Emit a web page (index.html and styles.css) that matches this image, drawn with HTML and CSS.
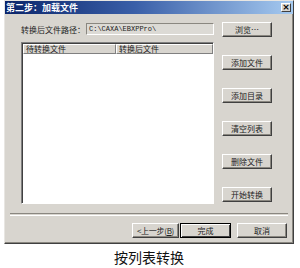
FILE: index.html
```html
<!DOCTYPE html>
<html lang="zh-CN">
<head>
<meta charset="UTF-8">
<title>按列表转换</title>
<link rel="stylesheet" href="styles.css">
</head>
<body>

<div class="page">
  <div class="dialog">
    <div class="titlebar">
      <span class="title">第二步：加载文件</span>
      <span class="close">×</span>
    </div>
    <div class="body">
      <div class="main">
        <div class="left">
          <div class="path-row">
            <span class="label">转换后文件路径：</span>
            <div class="field">C:\CAXA\EBXPPro\</div>
          </div>
          <div class="list">
            <div class="list-head">
              <div class="col col1">待转换文件</div>
              <div class="col col2">转换后文件</div>
            </div>
          </div>
        </div>
        <div class="right">
          <button class="btn">浏览…</button>
          <button class="btn">添加文件</button>
          <button class="btn">添加目录</button>
          <button class="btn">清空列表</button>
          <button class="btn">删除文件</button>
          <button class="btn">开始转换</button>
        </div>
      </div>
      <div class="sep"></div>
      <div class="footer">
        <button class="btn prev">&lt;上一步(<u>B</u>)</button>
        <button class="btn default">完成</button>
        <button class="btn cancel">取消</button>
      </div>
    </div>
  </div>
  <p class="caption">按列表转换</p>
</div>

</body>
</html>
```

FILE: styles.css
```css
body {
  margin: 0;
  padding: 0;
  background-color: #fff;
  font-family: "Noto Sans CJK SC", "Liberation Sans", sans-serif;
}
.page {
  width: 300px;
  padding-left: 4px;
  box-sizing: border-box;
}
.dialog {
  width: 290px;
  height: 244px;
  box-sizing: border-box;
  background-color: #d8d5cf;
  border: 1px solid;
  border-color: #e8e6e2 #404040 #404040 #e8e6e2;
  box-shadow: inset -1px -1px #8a8780;
}
.titlebar {
  height: 13px;
  display: flex;
  align-items: center;
  justify-content: space-between;
  padding: 0 2px 0 1px;
  background: linear-gradient(to right, #0a246a 0%, #3a5fa8 45%, #a6caf0 100%);
}
.title {
  color: #fff;
  font-size: 9px;
  font-weight: bold;
  line-height: 13px;
}
.close {
  width: 10px;
  height: 9px;
  background-color: #d8d5cf;
  border: 1px solid;
  border-color: #fff #404040 #404040 #fff;
  box-sizing: border-box;
  font-family: "DejaVu Sans", sans-serif;
  font-size: 9px;
  font-weight: bold;
  line-height: 6px;
  text-align: center;
  color: #000;
}
.body {
  padding: 8px 5px 0 5px;
}
.main {
  display: flex;
  gap: 8px;
  margin-left: 11px;
  height: 182px;
}
.left {
  width: 193px;
  display: flex;
  flex-direction: column;
}
.path-row {
  display: flex;
  align-items: center;
  height: 14px;
}
.label {
  width: 65px;
  font-size: 8px;
  color: #222;
}
.field {
  flex: 1;
  height: 12px;
  box-sizing: border-box;
  border: 1px solid;
  border-color: #8a8780 #fff #fff #8a8780;
  background-color: #dcdad5;
  font-family: "Liberation Mono", monospace;
  font-size: 7px;
  line-height: 10px;
  padding-left: 2px;
  color: #222;
}
.list {
  margin-top: 6px;
  height: 162px;
  box-sizing: border-box;
  background-color: #fff;
  border: 1px solid;
  border-color: #808080 #fff #fff #808080;
  box-shadow: inset 1px 1px #404040;
  padding: 1px 0 0 1px;
}
.list-head {
  display: flex;
  height: 10px;
}
.col {
  box-sizing: border-box;
  height: 10px;
  background-color: #d8d5cf;
  border: 1px solid;
  border-color: #fff #808080 #808080 #fff;
  font-size: 8px;
  line-height: 8px;
  padding-left: 2px;
  color: #222;
}
.col1 {
  width: 93px;
}
.col2 {
  flex: 1;
}
.right {
  width: 50px;
  display: flex;
  flex-direction: column;
  gap: 18px;
}
.btn {
  height: 15px;
  width: 50px;
  padding: 0;
  margin: 0;
  box-sizing: border-box;
  background-color: #d8d5cf;
  border: 1px solid;
  border-color: #fff #404040 #404040 #fff;
  box-shadow: inset -1px -1px #8a8780;
  font-family: "Noto Sans CJK SC", "Liberation Sans", sans-serif;
  font-size: 8px;
  line-height: 12px;
  color: #222;
  white-space: nowrap;
}
.sep {
  margin-top: 9px;
  height: 1px;
  border-top: 1px solid #8a8780;
  border-bottom: 1px solid #fff;
}
.footer {
  margin-top: 7px;
  display: flex;
  justify-content: flex-end;
  padding-right: 1px;
}
.footer .prev {
  width: 47px;
  letter-spacing: -0.3px;
}
.footer .default {
  width: 51px;
  margin-left: 1px;
  border: 1px solid #000;
  box-shadow: inset 1px 1px #fff, inset -1px -1px #404040;
}
.footer .cancel {
  margin-left: 6px;
}
.caption {
  margin: 4px 0 0 0;
  width: 290px;
  text-align: center;
  font-size: 14px;
  line-height: 18px;
  color: #111;
}
```
